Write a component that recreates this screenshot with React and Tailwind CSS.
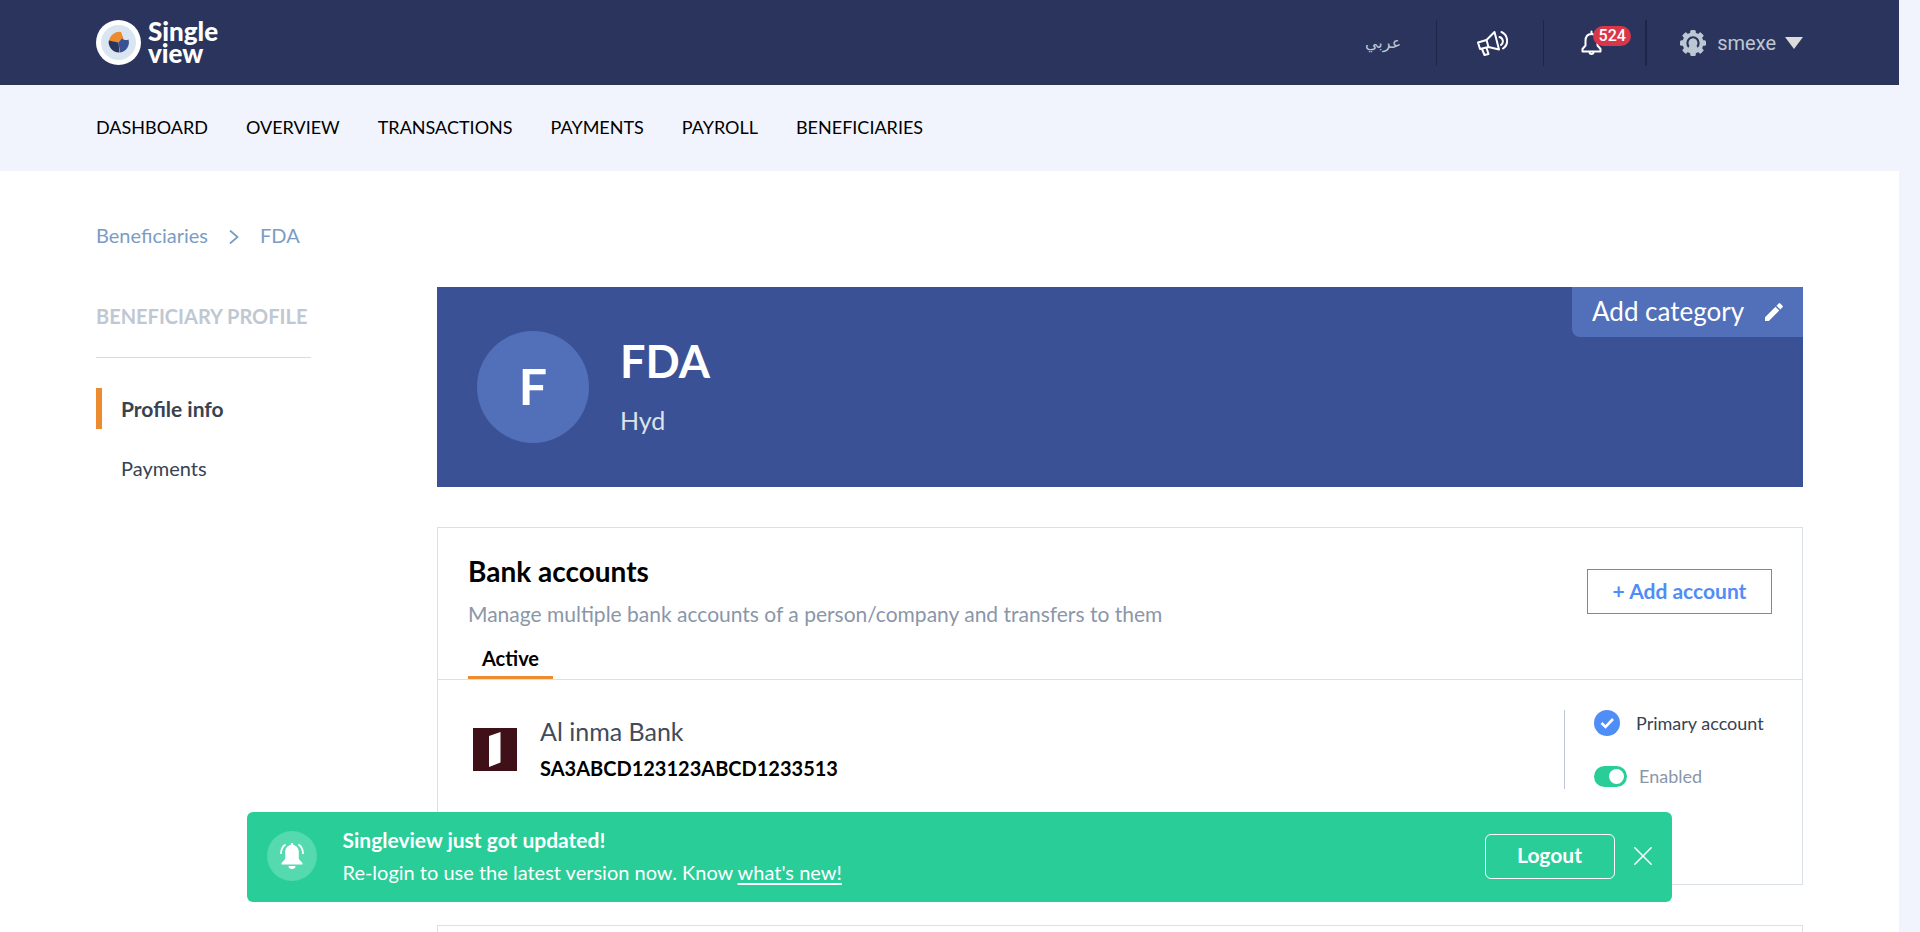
import React from "react";

const NAV = ["DASHBOARD", "OVERVIEW", "TRANSACTIONS", "PAYMENTS", "PAYROLL", "BENEFICIARIES"];

function Logo() {
  return (
    <a href="#" className="flex items-center gap-[7px] text-white">
      <svg className="size-[45px]" viewBox="0 0 45 45" aria-hidden="true">
        <circle cx="22.5" cy="22.5" r="22.5" fill="#fff" />
        <circle cx="22.5" cy="22.5" r="17.5" fill="#d9e6f2" />
        <path d="M22.5 22.5 13 21A10.5 10.5 0 0 1 25 12l2.500 6.500Z" fill="#ed8b2f" />
        <path d="M22.500 22.500 12.800 20.500A10.300 10.300 0 0 0 23.500 32.500Z" fill="#2b345d" />
        <path d="M22.500 22.500 26 18.500Q29 21 32.500 19.500A10.300 10.300 0 0 1 24 32.500Z" fill="#3a5295" />
      </svg>
      <span className="flex flex-col pb-0.5 text-[26px] leading-[22px] font-black">
        <span>Single</span>
        <span>view</span>
      </span>
    </a>
  );
}

function Megaphone() {
  return (
    <svg className="h-[26px] w-[32px]" viewBox="0 0 32 26" fill="none" stroke="#fff" strokeWidth="2" strokeLinecap="round" strokeLinejoin="round" aria-hidden="true">
      <path d="M2 12.500 10.500 10 18.500 2 23 19.500 12.500 17 4 19Z" />
      <path d="M10.500 10 12.500 17M6 19l2.500 6 4-1-2-6" />
      <path d="M23.500 7a4.500 4.500 0 0 1 1.500 8M25.500 2a9.500 9.500 0 0 1 1.500 16.500" />
    </svg>
  );
}

function Bell() {
  return (
    <svg className="h-[26px] w-[21px]" viewBox="0 0 21 26" fill="none" stroke="#fff" strokeWidth="2" strokeLinecap="round" strokeLinejoin="round" aria-hidden="true">
      <path d="M10.500 1.500V4M10.500 4C6 4 4.500 7.500 4.500 11v4.500L1.500 19v2.500h18V19l-3-3.500V11c0-3.500-1.500-7-6-7Z" />
      <path d="M8.500 22a2 2 0 0 0 4 0" />
    </svg>
  );
}

function UserGear() {
  return (
    <svg className="size-[26px]" viewBox="0 0 26 26" aria-hidden="true">
      <g fill="#bdc7d3">
        <circle cx="13" cy="13" r="10.500" />
        <rect x="10.200" y="0" width="5.600" height="26" rx="1.500" />
        <rect x="10.200" y="0" width="5.600" height="26" rx="1.500" transform="rotate(45 13 13)" />
        <rect x="10.200" y="0" width="5.600" height="26" rx="1.500" transform="rotate(90 13 13)" />
        <rect x="10.200" y="0" width="5.600" height="26" rx="1.500" transform="rotate(135 13 13)" />
      </g>
      <circle cx="13" cy="13" r="5.600" fill="none" stroke="#2b345d" strokeWidth="2.200" />
      <circle cx="13" cy="11.300" r="2.900" fill="#bdc7d3" />
      <path d="M8 20.500c0-4 1.500-5.500 5-5.500s5 1.500 5 5.500Z" fill="#bdc7d3" />
    </svg>
  );
}

function ToastBell() {
  return (
    <svg className="h-[26px] w-[24px]" viewBox="0 0 24 26" aria-hidden="true">
      <path d="M12 0c.8 0 1.300.5 1.300 1.200v.7c3.500.7 5.500 3.400 5.500 7v7l3.700 4v1.600H1.500v-1.600l3.700-4v-7c0-3.600 2-6.300 5.500-7v-.7C10.700.5 11.200 0 12 0Z" fill="#fff" />
      <path d="M8.500 23h7a3.500 3 0 0 1-7 0Z" fill="#fff" />
      <path d="M5.500 1.500C2.500 3.500 1 6.500 1 11M18.500 1.500C21.500 3.500 23 6.500 23 11" fill="none" stroke="#fff" strokeWidth="1.800" />
    </svg>
  );
}

function Header() {
  return (
    <header className="flex h-[85px] items-center justify-between bg-[#2b345d] px-24">
      <Logo />
      <div className="flex items-center text-[#bdc7d3]">
        <a href="#" lang="ar" className="pr-[35px] font-['DejaVu_Sans',sans-serif] text-base leading-6">عربي</a>
        <div className="flex h-[46px] w-[107px] items-center border-l border-[#1d2549] pl-[39px]">
          <button type="button" aria-label="Announcements"><Megaphone /></button>
        </div>
        <div className="flex h-[46px] w-[102px] items-center border-l border-[#1d2549] pl-[37px]">
          <button type="button" aria-label="Notifications" className="relative">
            <Bell />
            <span className="absolute -top-1 left-3 flex h-5 w-[38px] items-center justify-center rounded-full bg-[#d93649] font-['Roboto',sans-serif] text-base font-medium text-white">524</span>
          </button>
        </div>
        <div className="flex h-[46px] items-center border-l-2 border-[#1d2549] pl-[33px]">
          <button type="button" className="flex items-center gap-[11px]">
            <UserGear />
            <span className="flex items-center gap-[9px] font-['Roboto',sans-serif] text-[20px] leading-6">
              smexe
              <svg className="h-3 w-[18px]" viewBox="0 0 18 12" aria-hidden="true"><path d="M0 0h18L9 12Z" fill="#dcdcdc" /></svg>
            </span>
          </button>
        </div>
      </div>
    </header>
  );
}

function Sidebar() {
  return (
    <aside className="w-[215px] shrink-0">
      <h2 className="border-b border-[#d8dce8] pt-4 pb-7 text-[20px] leading-[26px] font-bold whitespace-nowrap text-[#bfc8d2]">BENEFICIARY PROFILE</h2>
      <ul className="mt-[30px] flex flex-col gap-[19px] text-[20px] leading-[41px] text-[#384252]">
        <li><a href="#" className="block border-l-6 border-[#ed8b31] pl-[19px] text-[21px] font-bold">Profile info</a></li>
        <li><a href="#" className="block pl-[25px]">Payments</a></li>
      </ul>
    </aside>
  );
}

function Banner() {
  return (
    <section className="flex h-[200px] items-start justify-between bg-[#3a5295]">
      <div className="flex h-full items-center gap-[31px] pl-10">
        <div className="flex size-28 items-center justify-center rounded-full bg-[#526fba] pb-0.5 text-[50px] leading-none font-bold text-white">F</div>
        <div className="pb-0.5">
          <h1 className="text-[45px] leading-[54px] font-bold text-white">FDA</h1>
          <p className="mt-3.5 text-[25px] leading-9 text-[#dde2ec]">Hyd</p>
        </div>
      </div>
      <button type="button" className="flex h-[50px] w-[231px] items-center justify-between rounded-bl-lg bg-[#526fba] px-5 text-[26px] leading-8 text-white">
        <span className="pb-0.5">Add category</span>
        <svg className="size-[18px]" viewBox="0 0 18 18" fill="#fff" aria-hidden="true">
          <path d="M0 14.200 10.500 3.700l3.800 3.800L3.800 18H0ZM11.500 2.700 13.700.500q.8-.8 1.600 0l2.200 2.200q.8.800 0 1.600L15.300 6.500Z" />
        </svg>
      </button>
    </section>
  );
}

function BankAccounts() {
  return (
    <section className="mt-10 h-[358px] border border-[#dadfe9]">
      <div className="flex items-start justify-between border-b border-[#dadfe9] px-[30px]">
        <div>
          <h2 className="pt-[25px] text-[28px] leading-9 font-bold text-black">Bank accounts</h2>
          <p className="mt-3 text-[21px] leading-[26px] text-[#8a96a9]">Manage multiple bank accounts of a person/company and transfers to them</p>
          <div role="tablist" className="mt-[18px] flex">
            <button type="button" role="tab" aria-selected="true" className="border-b-3 border-[#ed8b31] px-3.5 pb-[5px] text-[20px] leading-[26px] font-bold text-black">Active</button>
          </div>
        </div>
        <button type="button" className="mt-[41px] h-[45px] w-[185px] border border-[#4f8df7] pb-0.5 text-[21px] font-bold text-[#4f8df7]">+ Add account</button>
      </div>
      <div className="flex justify-between pt-[30px] pr-[38px] pl-[35px]">
        <div className="flex items-center gap-[23px]">
          <svg className="h-[43px] w-11" viewBox="0 0 44 43" aria-hidden="true">
            <path d="M0 0h44v43H0Z" fill="#3f1018" />
            <path d="M16 8 27.500 4v30.500L16 39Z" fill="#fff" />
          </svg>
          <div className="pb-1">
            <h3 className="text-[25px] leading-8 text-[#414b5c]">Al inma Bank</h3>
            <p className="mt-2 text-[20px] leading-[26px] font-bold text-black">SA3ABCD123123ABCD1233513</p>
          </div>
        </div>
        <div className="flex h-[79px] w-[200px] flex-col justify-between border-l border-[#bdc7d5] pl-[29px] text-[18px] leading-[26px] whitespace-nowrap">
          <div className="flex items-center gap-4 text-[#384252]">
            <svg className="size-[26px]" viewBox="0 0 26 26" aria-hidden="true">
              <circle cx="13" cy="13" r="13" fill="#4f8df7" />
              <path d="m7.500 13 4 4L19 9" fill="none" stroke="#fff" strokeWidth="2.600" />
            </svg>
            Primary account
          </div>
          <label className="flex items-center gap-3 text-[#8a96a9]">
            <input type="checkbox" defaultChecked className="peer sr-only" />
            <span className="flex h-[21px] w-[33px] items-center justify-end rounded-full bg-[#28cd98] pr-[3px]">
              <span className="size-[15px] rounded-full bg-white" />
            </span>
            Enabled
          </label>
        </div>
      </div>
    </section>
  );
}

function UpdateToast() {
  return (
    <div role="status" className="fixed right-0.5 bottom-[30px] left-0 mx-auto flex h-[90px] w-[calc(75%-15px)] items-center rounded-md bg-[#28cd98] pr-5 pb-0.5 pl-5 text-[20px] text-white">
      <div className="flex size-[50px] items-center justify-center rounded-full bg-[#55d9af]"><ToastBell /></div>
      <div className="ml-[26px] flex flex-col gap-1.5 leading-[26px]">
        <strong className="text-[21px]">Singleview just got updated!</strong>
        <p>Re-login to use the latest version now. Know <a href="#" className="underline underline-offset-3">what's new!</a></p>
      </div>
      <button type="button" className="ml-auto h-[45px] w-[130px] rounded-md border border-white pb-0.5 text-[21px] font-bold">Logout</button>
      <button type="button" aria-label="Close" className="ml-[19px]">
        <svg className="size-[18px]" viewBox="0 0 18 18" fill="none" stroke="#fff" strokeWidth="1.500" strokeLinecap="round" aria-hidden="true"><path d="m.8.800 16.400 16.400M17.200.800.8 17.200" /></svg>
      </button>
    </div>
  );
}

export default function App() {
  return (
    <div className="h-screen overflow-hidden bg-[#f1f4fd] pr-[21px] font-['Lato',sans-serif]">
      <Header />
      <nav className="flex h-[86px] items-center gap-[38px] px-24 pb-[3px] text-[18px] leading-6 text-black">
        {NAV.map((item) => (<a key={item} href="#">{item}</a>))}
      </nav>
      <main className="min-h-full bg-white px-24 pt-[51px]">
        <div className="flex items-center gap-[21px] text-[20px] leading-[26px] text-[#7b9cc4]">
          <a href="#">Beneficiaries</a>
          <svg className="mt-1 h-3.5 w-2.5" viewBox="0 0 10 14" fill="none" stroke="currentColor" strokeWidth="1.800" aria-hidden="true"><path d="m1 .5 7.500 6.500L1 13.500" /></svg>
          <a href="#">FDA</a>
        </div>
        <div className="mt-[39px] flex gap-[126px]">
          <Sidebar />
          <div className="min-w-0 flex-1">
            <Banner />
            <BankAccounts />
            <section className="mt-10 h-[358px] border border-[#dadfe9]" />
          </div>
        </div>
      </main>
      <UpdateToast />
    </div>
  );
}
